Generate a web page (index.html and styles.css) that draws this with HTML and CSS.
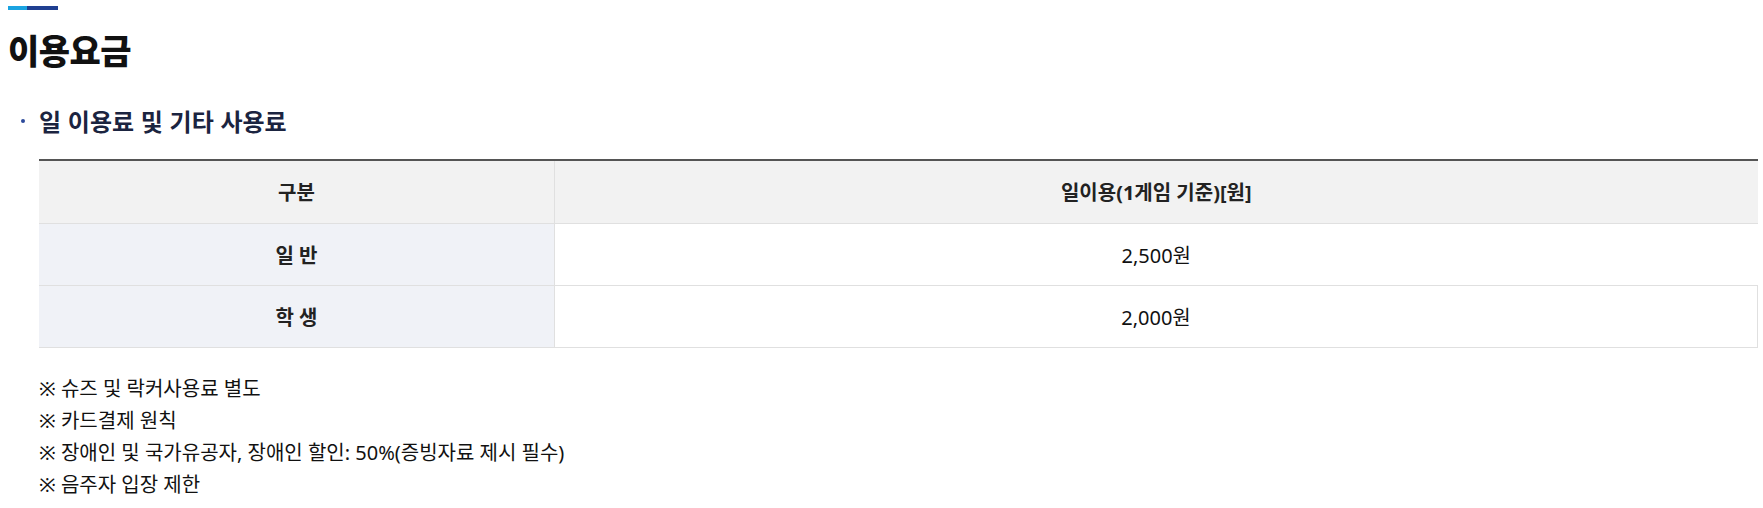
FILE: index.html
```html
<!DOCTYPE html>
<html lang="ko">
<head>
<meta charset="utf-8">
<title>이용요금</title>
<link rel="stylesheet" href="styles.css">
</head>
<body>
<div class="page">
  <div class="deco"><span class="deco-light"></span><span class="deco-dark"></span></div>
  <h2 class="title">이용요금</h2>
  <h3 class="subtitle"><span class="dot"></span><span>일 이용료 및 기타 사용료</span></h3>
  <table class="fee">
    <thead>
      <tr><th class="col-a">구분</th><th class="col-b">일이용(1게임 기준)[원]</th></tr>
    </thead>
    <tbody>
      <tr><th>일 반</th><td>2,500원</td></tr>
      <tr><th>학 생</th><td>2,000원</td></tr>
    </tbody>
  </table>
  <ul class="notes">
    <li>※ 슈즈 및 락커사용료 별도</li>
    <li>※ 카드결제 원칙</li>
    <li>※ 장애인 및 국가유공자, 장애인 할인: 50%(증빙자료 제시 필수)</li>
    <li>※ 음주자 입장 제한</li>
  </ul>
</div>
</body>
</html>
```
FILE: styles.css
```css
* { box-sizing: border-box; }
body {
  margin: 0;
  background: #fff;
  font-family: "Noto Sans", "Noto Sans CJK KR", sans-serif;
  color: #222;
}
.page { padding: 6px 0 0 8px; }
.deco { display: flex; height: 4px; }
.deco-light { width: 19px; background: #1aa3e1; }
.deco-dark { width: 31px; background: #1f3f91; }
.title {
  margin: 20px 0 0;
  font-family: "Noto Sans CJK KR", sans-serif;
  font-size: 34px;
  line-height: 40px;
  letter-spacing: -0.5px;
  font-weight: 900;
  color: #111;
}
.subtitle {
  display: flex;
  align-items: center;
  margin: 35px 0 0;
  font-family: "Noto Sans CJK KR", sans-serif;
  font-size: 24px;
  line-height: 32px;
  font-weight: 700;
  color: #1b2440;
}
.dot {
  width: 4px; height: 4px; border-radius: 50%;
  background: #2c4a9b;
  margin: 0 14px 0 13px;
}
.fee {
  margin: 22px 0 0 31px;
  width: 1719px;
  border-collapse: collapse;
  border-top: 2px solid #555;
  font-size: 20px;
}
.fee th, .fee td {
  height: 62px;
  padding: 0;
  text-align: center;
  vertical-align: middle;
  border-bottom: 1px solid #e0e0e0;
}
.fee thead th {
  height: 63px;
  background: #f2f2f2;
  font-weight: 700;
  color: #222;
}
.col-a { width: 30%; border-right: 1px solid #e0e0e0; }
.fee tbody th {
  background: #f0f2f7;
  font-weight: 700;
  border-right: 1px solid #e0e0e0;
}
.fee tbody td { font-weight: 400; color: #111; }
.fee tbody tr:last-child td { border-right: 1px solid #e0e0e0; }
.notes {
  list-style: none;
  margin: 25px 0 0 31px;
  padding: 0;
  font-size: 20px;
  line-height: 32px;
  color: #111;
}
```
